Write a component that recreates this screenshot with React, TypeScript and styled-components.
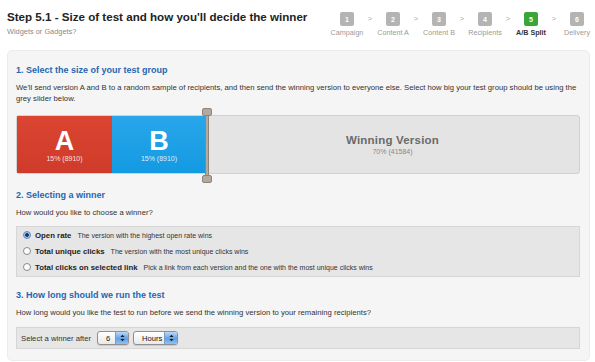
import React from "react";
import styled, { createGlobalStyle } from "styled-components";

const GlobalStyle = createGlobalStyle`
  html, body { margin: 0; padding: 0; background: #ffffff; }
  body { font-family: "Liberation Sans", Arial, Helvetica, sans-serif; color: #333; }
`;

const Page = styled.div`
  width: 595px;
  height: 362px;
  overflow: hidden;
  display: flex;
  flex-direction: column;
`;

const Header = styled.header`
  display: flex;
  justify-content: space-between;
  align-items: flex-start;
  padding: 9px 1px 0 7px;
  height: 50px;
  box-sizing: border-box;
  flex-shrink: 0;
`;

const TitleBlock = styled.div`
  display: flex;
  flex-direction: column;
`;

const Title = styled.h1`
  margin: 0;
  font-size: 11.6px;
  line-height: 15px;
  font-weight: bold;
  color: #222;
`;

const Subtitle = styled.div`
  font-size: 7.4px;
  line-height: 10px;
  color: #8a8a8a;
  margin-top: 3px;
`;

const Steps = styled.nav`
  display: flex;
  align-items: flex-start;
  padding-top: 3px;
`;

const Step = styled.div`
  width: 34px;
  display: flex;
  flex-direction: column;
  align-items: center;
`;

const StepBox = styled.div<{ $active?: boolean }>`
  width: 14px;
  height: 14px;
  border-radius: 2px;
  background: ${(p) => (p.$active ? "#3aa63a" : "#b4b4b4")};
  color: #fff;
  font-size: 7px;
  font-weight: bold;
  display: flex;
  align-items: center;
  justify-content: center;
`;

const StepLabel = styled.div<{ $active?: boolean }>`
  margin-top: 2px;
  font-size: 7.2px;
  line-height: 9px;
  color: ${(p) => (p.$active ? "#333" : "#9a9a9a")};
  font-weight: ${(p) => (p.$active ? "bold" : "normal")};
  white-space: nowrap;
`;

const StepSep = styled.div`
  width: 12px;
  text-align: center;
  font-size: 7.5px;
  line-height: 9px;
  color: #a8a8a8;
  padding-top: 2px;
`;

const Panel = styled.main`
  margin: 0 5px 1px 7px;
  background: #f5f5f5;
  border: 1px solid #ececec;
  border-radius: 5px;
  padding: 13px 9px 0 8px;
  flex: 1;
`;

const SectionTitle = styled.h2<{ $mt?: number }>`
  margin: ${(p) => p.$mt ?? 0}px 0 0 0;
  font-size: 9px;
  line-height: 12px;
  font-weight: bold;
  color: #2566b0;
`;

const Text = styled.p`
  margin: 6px 0 0 0;
  font-size: 7.7px;
  line-height: 11px;
  color: #333;
`;

const Slider = styled.div`
  position: relative;
  margin-top: 11px;
  height: 59px;
  display: flex;
  border-radius: 3px;
  background: #e4e4e4;
  border: 1px solid #d2d2d2;
  box-sizing: border-box;
`;

const Segment = styled.div<{ $bg: string; $w: number }>`
  width: ${(p) => p.$w}px;
  background: ${(p) => p.$bg};
  display: flex;
  flex-direction: column;
  align-items: center;
  justify-content: center;
  color: #fff;
`;

const BigLetter = styled.div`
  font-size: 27px;
  line-height: 26px;
  font-weight: bold;
  margin-top: 2px;
`;

const SegPct = styled.div`
  font-size: 7px;
  line-height: 9px;
  color: rgba(255, 255, 255, 0.85);
`;

const Winning = styled.div`
  flex: 1;
  display: flex;
  flex-direction: column;
  align-items: center;
  justify-content: center;
  color: #666;
`;

const WinTitle = styled.div`
  font-size: 11.5px;
  line-height: 13px;
  font-weight: bold;
  letter-spacing: 0.2px;
  color: #6a6a6a;
`;

const WinPct = styled.div`
  font-size: 7px;
  line-height: 9px;
  color: #888;
`;

const Handle = styled.div`
  position: absolute;
  left: 185px;
  top: -8px;
  width: 10px;
  height: 75px;
  display: flex;
  flex-direction: column;
  align-items: center;
`;

const Knob = styled.div`
  width: 10px;
  height: 8px;
  border-radius: 2px;
  background: #b3a99e;
  border: 1px solid #8d857c;
  box-sizing: border-box;
`;

const Bar = styled.div`
  flex: 1;
  width: 4px;
  background: #b3a99e;
  border-left: 1px solid #8d857c;
  border-right: 1px solid #8d857c;
  box-sizing: border-box;
`;

const OptionBox = styled.div`
  margin-top: 8px;
  background: #e6e6e6;
  border: 1px solid #d6d6d6;
  padding: 0 6px 1px 6px;
  display: flex;
  flex-direction: column;
`;

const OptionRow = styled.label`
  display: flex;
  align-items: center;
  height: 16px;
  gap: 4px;
`;

const Radio = styled.span<{ $checked?: boolean }>`
  width: 8px;
  height: 8px;
  border-radius: 50%;
  box-sizing: border-box;
  border: 1px solid ${(p) => (p.$checked ? "#5f86b8" : "#8a8a8a")};
  background: ${(p) =>
    p.$checked ? "radial-gradient(circle, #1c3f73 0 1.6px, #a9c7ea 2.2px)" : "#fdfdfd"};
  flex-shrink: 0;
`;

const OptName = styled.span`
  font-size: 7.8px;
  font-weight: bold;
  color: #222;
  white-space: nowrap;
`;

const OptDesc = styled.span`
  font-size: 7px;
  color: #333;
  margin-left: 2px;
  white-space: nowrap;
`;

const SelectRow = styled.div`
  margin-top: 9px;
  background: #e6e6e6;
  border: 1px solid #d6d6d6;
  height: 22px;
  box-sizing: border-box;
  display: flex;
  align-items: center;
  padding-left: 4px;
  gap: 4px;
`;

const SelectLabel = styled.span`
  font-size: 7.7px;
  color: #333;
  margin-right: 2px;
`;

const FakeSelect = styled.div<{ $w: number }>`
  width: ${(p) => p.$w}px;
  height: 14px;
  box-sizing: border-box;
  border: 1px solid #8f8f8f;
  border-radius: 3px;
  background: linear-gradient(#ffffff, #e9e9e9);
  display: flex;
  align-items: stretch;
  overflow: hidden;
  box-shadow: 0 1px 1px rgba(0, 0, 0, 0.12);
`;

const SelectValue = styled.span`
  flex: 1;
  font-size: 7.6px;
  display: flex;
  align-items: center;
  padding-left: 8px;
  color: #111;
`;

const SelectArrow = styled.span`
  width: 12px;
  background: linear-gradient(#bcd9f5, #5fa2e6 55%, #8fc1f1);
  border-left: 1px solid #7f9dbd;
  display: flex;
  align-items: center;
  justify-content: center;
`;

const ArrowIcon = () => (
  <svg width="5" height="8" viewBox="0 0 5 8">
    <path d="M0.5 3 L2.5 0.8 L4.5 3 Z" fill="#1a1a1a" />
    <path d="M0.5 5 L2.5 7.2 L4.5 5 Z" fill="#1a1a1a" />
  </svg>
);

const steps = [
  { n: 1, label: "Campaign" },
  { n: 2, label: "Content A" },
  { n: 3, label: "Content B" },
  { n: 4, label: "Recipients" },
  { n: 5, label: "A/B Split", active: true },
  { n: 6, label: "Delivery" },
];

const options = [
  { name: "Open rate", desc: "The version with the highest open rate wins", checked: true },
  { name: "Total unique clicks", desc: "The version with the most unique clicks wins" },
  {
    name: "Total clicks on selected link",
    desc: "Pick a link from each version and the one with the most unique clicks wins",
  },
];

export default function App() {
  return (
    <Page>
      <GlobalStyle />
      <Header>
        <TitleBlock>
          <Title>Step 5.1 - Size of test and how you'll decide the winner</Title>
          <Subtitle>Widgets or Gadgets?</Subtitle>
        </TitleBlock>
        <Steps>
          {steps.map((s, i) => (
            <React.Fragment key={s.n}>
              {i > 0 && <StepSep>&gt;</StepSep>}
              <Step>
                <StepBox $active={s.active}>{s.n}</StepBox>
                <StepLabel $active={s.active}>{s.label}</StepLabel>
              </Step>
            </React.Fragment>
          ))}
        </Steps>
      </Header>
      <Panel>
        <SectionTitle>1. Select the size of your test group</SectionTitle>
        <Text>
          We'll send version A and B to a random sample of recipients, and then send the winning
          version to everyone else. Select how big your test group should be using the grey
          slider below.
        </Text>
        <Slider>
          <Segment $bg="linear-gradient(#db4532, #cf3b2a)" $w={95}>
            <BigLetter>A</BigLetter>
            <SegPct>15% (8910)</SegPct>
          </Segment>
          <Segment $bg="linear-gradient(#2aa6ea, #139ae2)" $w={94}>
            <BigLetter>B</BigLetter>
            <SegPct>15% (8910)</SegPct>
          </Segment>
          <Winning>
            <WinTitle>Winning Version</WinTitle>
            <WinPct>70% (41584)</WinPct>
          </Winning>
          <Handle>
            <Knob />
            <Bar />
            <Knob />
          </Handle>
        </Slider>

        <SectionTitle $mt={15}>2. Selecting a winner</SectionTitle>
        <Text>How would you like to choose a winner?</Text>
        <OptionBox>
          {options.map((o) => (
            <OptionRow key={o.name}>
              <Radio $checked={o.checked} />
              <OptName>{o.name}</OptName>
              <OptDesc>{o.desc}</OptDesc>
            </OptionRow>
          ))}
        </OptionBox>

        <SectionTitle $mt={12}>3. How long should we run the test</SectionTitle>
        <Text>
          How long would you like the test to run before we send the winning version to your
          remaining recipients?
        </Text>
        <SelectRow>
          <SelectLabel>Select a winner after</SelectLabel>
          <FakeSelect $w={32}>
            <SelectValue>6</SelectValue>
            <SelectArrow>
              <ArrowIcon />
            </SelectArrow>
          </FakeSelect>
          <FakeSelect $w={45}>
            <SelectValue>Hours</SelectValue>
            <SelectArrow>
              <ArrowIcon />
            </SelectArrow>
          </FakeSelect>
        </SelectRow>
      </Panel>
    </Page>
  );
}
